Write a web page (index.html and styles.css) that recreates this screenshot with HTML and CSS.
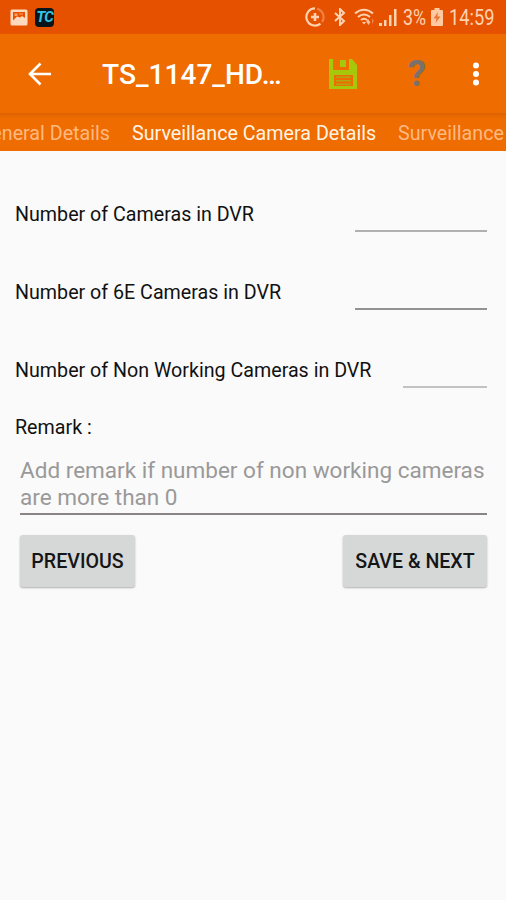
FILE: index.html
```
<!DOCTYPE html>
<html lang="en">
<head>
<meta charset="utf-8">
<title>Surveillance Camera Details</title>
<link rel="stylesheet" href="styles.css">
</head>
<body>
<div class="status">
  <svg class="status-photo" width="18" height="17" viewBox="0 0 18 17"><rect x=".5" y=".5" width="17" height="16" rx="1.500" fill="#ffd9bd"/><path d="M3 3h12v6l-3-2-2 1.500-3-1-4 4z" fill="#e65100"/><path d="M4.500 4.500h3v2.500h-3zM9 4.500h4v1H9z" fill="#f7a06c"/></svg>
  <span class="tc">TC</span>
  <span class="spacer"></span>
  <svg class="status-data" width="20" height="20" viewBox="0 0 20 20" fill="none" stroke="#ffd2b0" stroke-width="2.200"><path d="M10 1.400A8.600 8.600 0 1 0 15.500 16.600"/><path d="M12 1.700A8.600 8.600 0 0 1 17 15" stroke="#f08045"/><path d="M10 6v8M6 10h8" stroke-width="2.600"/></svg>
  <svg class="status-bt" width="12" height="18" viewBox="0 0 12 18" fill="none" stroke="#ffd2b0" stroke-width="2"><path d="M1 5l9 8-4 4V1l4 4-9 8"/></svg>
  <svg class="status-wifi" width="22" height="18" viewBox="0 0 22 18" fill="none" stroke="#ffd2b0" stroke-width="2"><path d="M1 5.500Q10 -2 19 5.500M4 9Q10 4 16 9M7 12Q10 9.500 13 12"/><path d="M8 14h4l-2 2.500z" fill="#ffd2b0" stroke="none"/><path d="M12 14l2-3 2 3zM12.500 14l2 3 2-3z" fill="#ffc095" stroke="none"/><path d="M18 10l2 3-2 3z" fill="#f08045" stroke="none"/></svg>
  <svg class="status-signal" width="18" height="18" viewBox="0 0 18 18" fill="#ffd2b0"><path d="M0 15h3v3H0zM5 12h2.500v6H5zM10 7h2.500v11H10zM15 1h2.500v17H15z"/></svg>
  <span class="percent">3%</span>
  <svg class="status-battery" width="12" height="18" viewBox="0 0 12 18"><path d="M3.500 0h5v2H11q1 0 1 1v14q0 1-1 1H1q-1 0-1-1V3q0-1 1-1h2.500z" fill="#ffc9a2"/><path d="M7 4L2.500 10.500H5.500L4.500 15L9.500 8.500H6.500z" fill="#ed7635"/></svg>
  <span class="clock">14:59</span>
</div>
<header class="toolbar">
  <svg class="back" width="24" height="24" viewBox="0 0 24 24" fill="none" stroke="#fff" stroke-width="2.600"><path d="M23 12H3M12.500 1.500L2 12l10.500 10.500"/></svg>
  <h1 class="title">TS_1147_HD…</h1>
  <svg class="save" width="30" height="32" viewBox="0 0 30 32"><path fill="#a6c80b" fill-rule="evenodd" d="M1 1h4v11h16V1h3l5 6v24H1zM6 17v11h19V17z"/><path d="M12 2h6v7h-6z" fill="#a6c80b"/><path d="M8 18.500h15V20H8zM8 22h15v1.500H8zM8 25.500h15V27H8z" fill="#b3a50b"/></svg>
  <span class="help">?</span>
  <svg class="more" width="8" height="24" viewBox="0 0 8 24" fill="#fff"><circle cx="4" cy="3.500" r="3"/><circle cx="4" cy="12" r="3"/><circle cx="4" cy="20.500" r="3"/></svg>
</header>
<nav class="tabs">
  <span class="tab tab-prev">General Details</span>
  <span class="tab tab-active">Surveillance Camera Details</span>
  <span class="tab tab-next">Surveillance</span>
</nav>
<main class="form">
  <div class="row"><label>Number of Cameras in DVR</label><span class="field light"></span></div>
  <div class="row"><label>Number of 6E Cameras in DVR</label><span class="field"></span></div>
  <div class="row"><label>Number of Non Working Cameras in DVR</label><span class="field short light"></span></div>
  <label class="remark-label">Remark :</label>
  <div class="remark">Add remark if number of non working cameras<br>are more than 0</div>
  <div class="actions"><button class="btn previous">PREVIOUS</button><button class="btn next">SAVE &amp; NEXT</button></div>
</main>
</body>
</html>
```
FILE: styles.css
```
* { box-sizing: border-box; }
body { margin: 0; width: 506px; height: 900px; overflow: hidden; background: #fafafa; color: #111; font-family: Roboto, "Liberation Sans", sans-serif; }
svg { display: block; flex: none; }
.status { height: 34px; padding: 0 11px 0 10px; display: flex; align-items: center; background: #e65100; color: #ffd2b0; }
.tc { width: 19px; height: 19px; margin-left: 7px; border-radius: 4px; background: #06151b; color: #35c4e6; font-size: 15px; line-height: 19px; font-style: italic; font-weight: 700; text-align: center; letter-spacing: -1px; }
.spacer { flex: 1; }
.status-bt { margin-left: 9px; }
.status-wifi { margin-left: 8px; }
.status-signal { margin-left: 3px; }
.percent, .clock { font-size: 21.5px; line-height: 34px; white-space: nowrap; transform-origin: left center; padding-top: 2px; }
.percent { width: 24px; margin-left: 6px; transform: scaleX(.83); }
.status-battery { margin-left: 4px; }
.clock { width: 46px; margin-left: 6px; transform: scaleX(.85); }
.toolbar { height: 79px; display: flex; align-items: center; padding: 0 26px 0 28px; background: #ef6c00; color: #fff; }
.title { width: 182px; margin: 0 0 0 50px; font-size: 28.1px; font-weight: 500; line-height: 32px; white-space: nowrap; padding-top: 3px; }
.save { margin-left: 44px; }
.help { width: 20px; margin-left: 49px; color: #7b706a; font-size: 37px; line-height: 40px; font-weight: 700; text-align: center; padding-top: 1px; }
.more { margin-left: auto; }
.tabs { height: 38px; display: flex; overflow: hidden; background: linear-gradient(#d96200, #e96900 3px, #ef6c00 7px); }
.tab { flex: none; font-size: 19.7px; line-height: 42px; white-space: nowrap; color: #ffb981; }
.tab-prev { width: 110px; display: flex; justify-content: flex-end; }
.tab-active { width: 245px; margin-left: 22px; color: #fff4e4; }
.tab-next { margin-left: 21px; }
.form { padding: 24px 19px 0 15px; }
.row { height: 78px; display: flex; align-items: flex-start; justify-content: space-between; }
.row label, .remark-label { font-size: 19.67px; line-height: 24px; white-space: nowrap; }
.row label { margin-top: 28px; }
.field { width: 132px; height: 57px; border-bottom: 2px solid #929292; }
.field.light { border-color: #b0b0b0; }
.field.short { width: 84px; border-color: #c2c2c2; }
.remark-label { display: block; margin-top: 7px; }
.remark { height: 75px; margin: 0 0 0 5px; padding-top: 18px; border-bottom: 2px solid #898585; color: #999; font-size: 22.54px; line-height: 26.5px; white-space: nowrap; }
.actions { display: flex; justify-content: space-between; margin: 20px 0 0 5px; }
.btn { height: 52px; padding: 1px 0 0; border: 0; border-radius: 3px; background: #d6d8d7; box-shadow: 0 1px 2px rgba(0,0,0,.3); color: #151515; font: 500 19.6px Roboto, sans-serif; white-space: nowrap; }
.previous { width: 115px; }
.next { width: 144px; }
```
